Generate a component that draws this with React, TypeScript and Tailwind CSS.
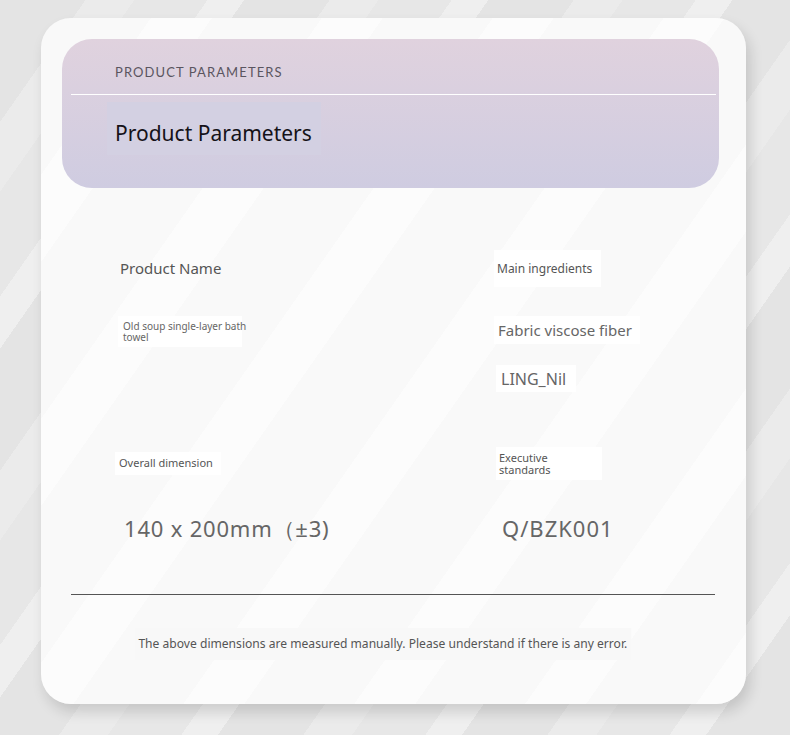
import React from "react";

export default function App() {
  return (
    <div
      className="w-[790px] h-[735px] overflow-hidden pt-[18px] bg-[repeating-linear-gradient(125deg,#e4e4e4_0px,#e4e4e4_70px,#ebebeb_70px,#ebebeb_110px,#e7e7e7_110px,#e7e7e7_170px,#efefef_170px,#efefef_200px)]"
      style={{ fontFamily: '"Noto Sans", "Open Sans", sans-serif' }}
    >
      <div className="ml-[41px] w-[705px] h-[686px] rounded-[30px] shadow-[4px_8px_14px_rgba(0,0,0,0.14)] pt-[21px] pl-[21px] flex flex-col bg-[repeating-linear-gradient(125deg,#f9f9f9_0px,#f9f9f9_90px,#fcfcfc_90px,#fcfcfc_140px)]">
        {/* Header panel */}
        <div className="w-[657px] h-[149px] rounded-[30px] bg-gradient-to-b from-[#e0d2de] to-[#cfcce1] flex flex-col">
          <div className="h-[55px] flex items-center pl-[53px] pt-[12px]">
            <span
              className="text-[13px] tracking-[1.1px] text-[#5a5560]"
              style={{ fontFamily: 'Lato, "Noto Sans", sans-serif' }}
            >
              PRODUCT PARAMETERS
            </span>
          </div>
          <div className="ml-[9px] mr-[3px] h-px bg-white" />
          <div className="ml-[45px] mt-[7px] w-[214px] h-[53px] bg-[#d3d0e2] flex items-center pl-[8px] pt-[11px]">
            <span className="text-[21px] text-[#151218]">Product Parameters</span>
          </div>
        </div>

        {/* Body */}
        <div className="pl-[53px] mt-[62px] grid grid-cols-[379px_1fr]">
          {/* Row 1 */}
          <div className="h-[37px] flex items-center">
            <span className="pl-[5px] text-[15px] text-[#555]">Product Name</span>
          </div>
          <div className="h-[37px]">
            <div className="inline-flex h-[37px] items-center bg-white px-[3px] pr-[9px]">
              <span className="text-[12px] text-[#555]">Main ingredients</span>
            </div>
          </div>

          {/* Row 2 */}
          <div className="mt-[29px]">
            <div className="ml-[3px] w-[124px] bg-white pl-[5px] pt-[5px] pb-[4px] text-[10px] leading-[11px] text-[#666] whitespace-nowrap">
              Old soup single-layer bath
              <br />
              towel
            </div>
          </div>
          <div className="mt-[29px] flex flex-col items-start">
            <div className="h-[28px] flex items-center bg-white pl-[4px] pr-[8px]">
              <span className="text-[15px] text-[#666]">Fabric viscose fiber</span>
            </div>
            <div className="mt-[21px] h-[27px] flex items-center bg-white pl-[5px] pr-[10px] ml-[2px]">
              <span className="text-[16px] text-[#666]">LING_Nil</span>
            </div>
          </div>

          {/* Row 3 */}
          <div className="mt-[55px] h-[33px] flex items-center">
            <div className="h-[23px] flex items-center bg-white pl-[4px] pr-[8px]">
              <span className="text-[11px] text-[#555]">Overall dimension</span>
            </div>
          </div>
          <div className="mt-[55px] h-[33px]">
            <div className="h-[33px] w-[106px] ml-[2px] bg-white pl-[3px] pt-[5px] text-[11px] leading-[12px] text-[#555]">
              Executive
              <br />
              standards
            </div>
          </div>

          {/* Row 4 */}
          <div className="mt-[30px] h-[36px] flex items-center">
            <span className="pl-[9px] text-[22px] tracking-[0.8px] text-[#666]">140 x 200mm（±3)</span>
          </div>
          <div className="mt-[30px] h-[36px] flex items-center">
            <span className="pl-[8px] text-[22px] tracking-[1px] text-[#666]">Q/BZK001</span>
          </div>
        </div>

        <div className="ml-[9px] w-[644px] h-px bg-[#555] mt-[48px]" />

        <div className="mt-[33px] w-[623px] ml-[9px] flex justify-center">
          <span className="inline-block text-[13px] text-[#555] scale-x-[0.93] whitespace-nowrap bg-[#f8f8f8] px-[4px] py-[6px]">
            The above dimensions are measured manually. Please understand if there is any error.
          </span>
        </div>
      </div>
    </div>
  );
}
